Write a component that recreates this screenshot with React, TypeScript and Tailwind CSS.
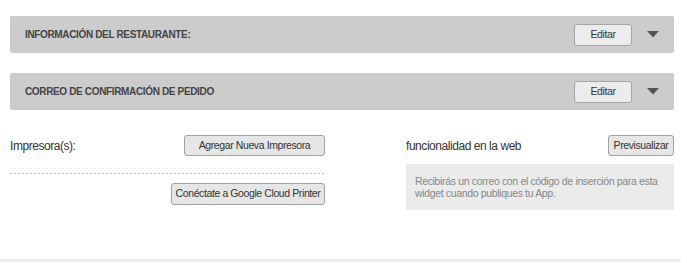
export default function App() {
  const sections = ['INFORMACIÓN DEL RESTAURANTE:', 'CORREO DE CONFIRMACIÓN DE PEDIDO'];

  return (
    <div className="w-[687px] h-[263px] bg-white font-['Liberation_Sans',Arial,sans-serif] text-[#333] overflow-hidden">
      <div className="pt-4 pl-[10px] pr-[13px] flex flex-col gap-[20px]">
        {sections.map((title) => (
          <div key={title} className="h-[37px] bg-[#cccccc] rounded-[2px] flex items-center pl-[15px] pr-[15px]">
            <span className="text-[10px] font-bold text-[#444] tracking-[-0.35px] flex-1">{title}</span>
            <button className="w-[58px] h-[22px] bg-[#ececec] border border-[#a5a5a5] rounded-[3px] text-[10.5px] tracking-[-0.4px] text-[#333]">
              Editar
            </button>
            <svg width="12" height="7" viewBox="0 0 12 7" className="ml-[15px]">
              <path d="M0 0 L12 0 L6 6.5 Z" fill="#555" />
            </svg>
          </div>
        ))}
      </div>

      <div className="flex pl-[10px] pr-[13px] mt-[25px] h-[75px]">
        <div className="w-[315px] flex flex-col">
          <div className="flex items-center justify-between h-[21px]">
            <span className="text-[12px] tracking-[-0.45px] text-[#333]">Impresora(s):</span>
            <button className="w-[141px] h-[21px] bg-[#e6e6e6] border border-[#a0a0a0] rounded-[3px] text-[10.5px] tracking-[-0.4px] text-[#333] whitespace-nowrap">
              Agregar Nueva Impresora
            </button>
          </div>
          <div className="mt-[17px] h-px bg-[repeating-linear-gradient(to_right,#c6c6c6_0_2px,transparent_2px_4px)]" />
          <div className="flex justify-end mt-[9px]">
            <button className="w-[154px] h-[22px] bg-[#e6e6e6] border border-[#a0a0a0] rounded-[3px] text-[10.5px] tracking-[-0.4px] text-[#333] whitespace-nowrap">
              Conéctate a Google Cloud Printer
            </button>
          </div>
        </div>

        <div className="ml-[81px] w-[268px] flex flex-col">
          <div className="flex items-center justify-between h-[21px]">
            <span className="text-[12px] tracking-[-0.45px] text-[#333]">funcionalidad en la web</span>
            <button className="w-[66px] h-[21px] bg-[#e6e6e6] border border-[#a0a0a0] rounded-[3px] text-[10.5px] tracking-[-0.4px] text-[#333] whitespace-nowrap">
              Previsualizar
            </button>
          </div>
          <div className="mt-[8px] h-[46px] bg-[#ebebeb] pl-[9px] pr-[12px] pt-[11px] text-[10.5px] tracking-[-0.35px] leading-[12px] text-[#888]">
            Recibirás un correo con el código de inserción para esta widget cuando publiques tu App.
          </div>
        </div>
      </div>

      <div className="mt-[49px] h-[3px] bg-[#ececec] mr-[6px] rounded-r-[2px]" />
    </div>
  );
}
